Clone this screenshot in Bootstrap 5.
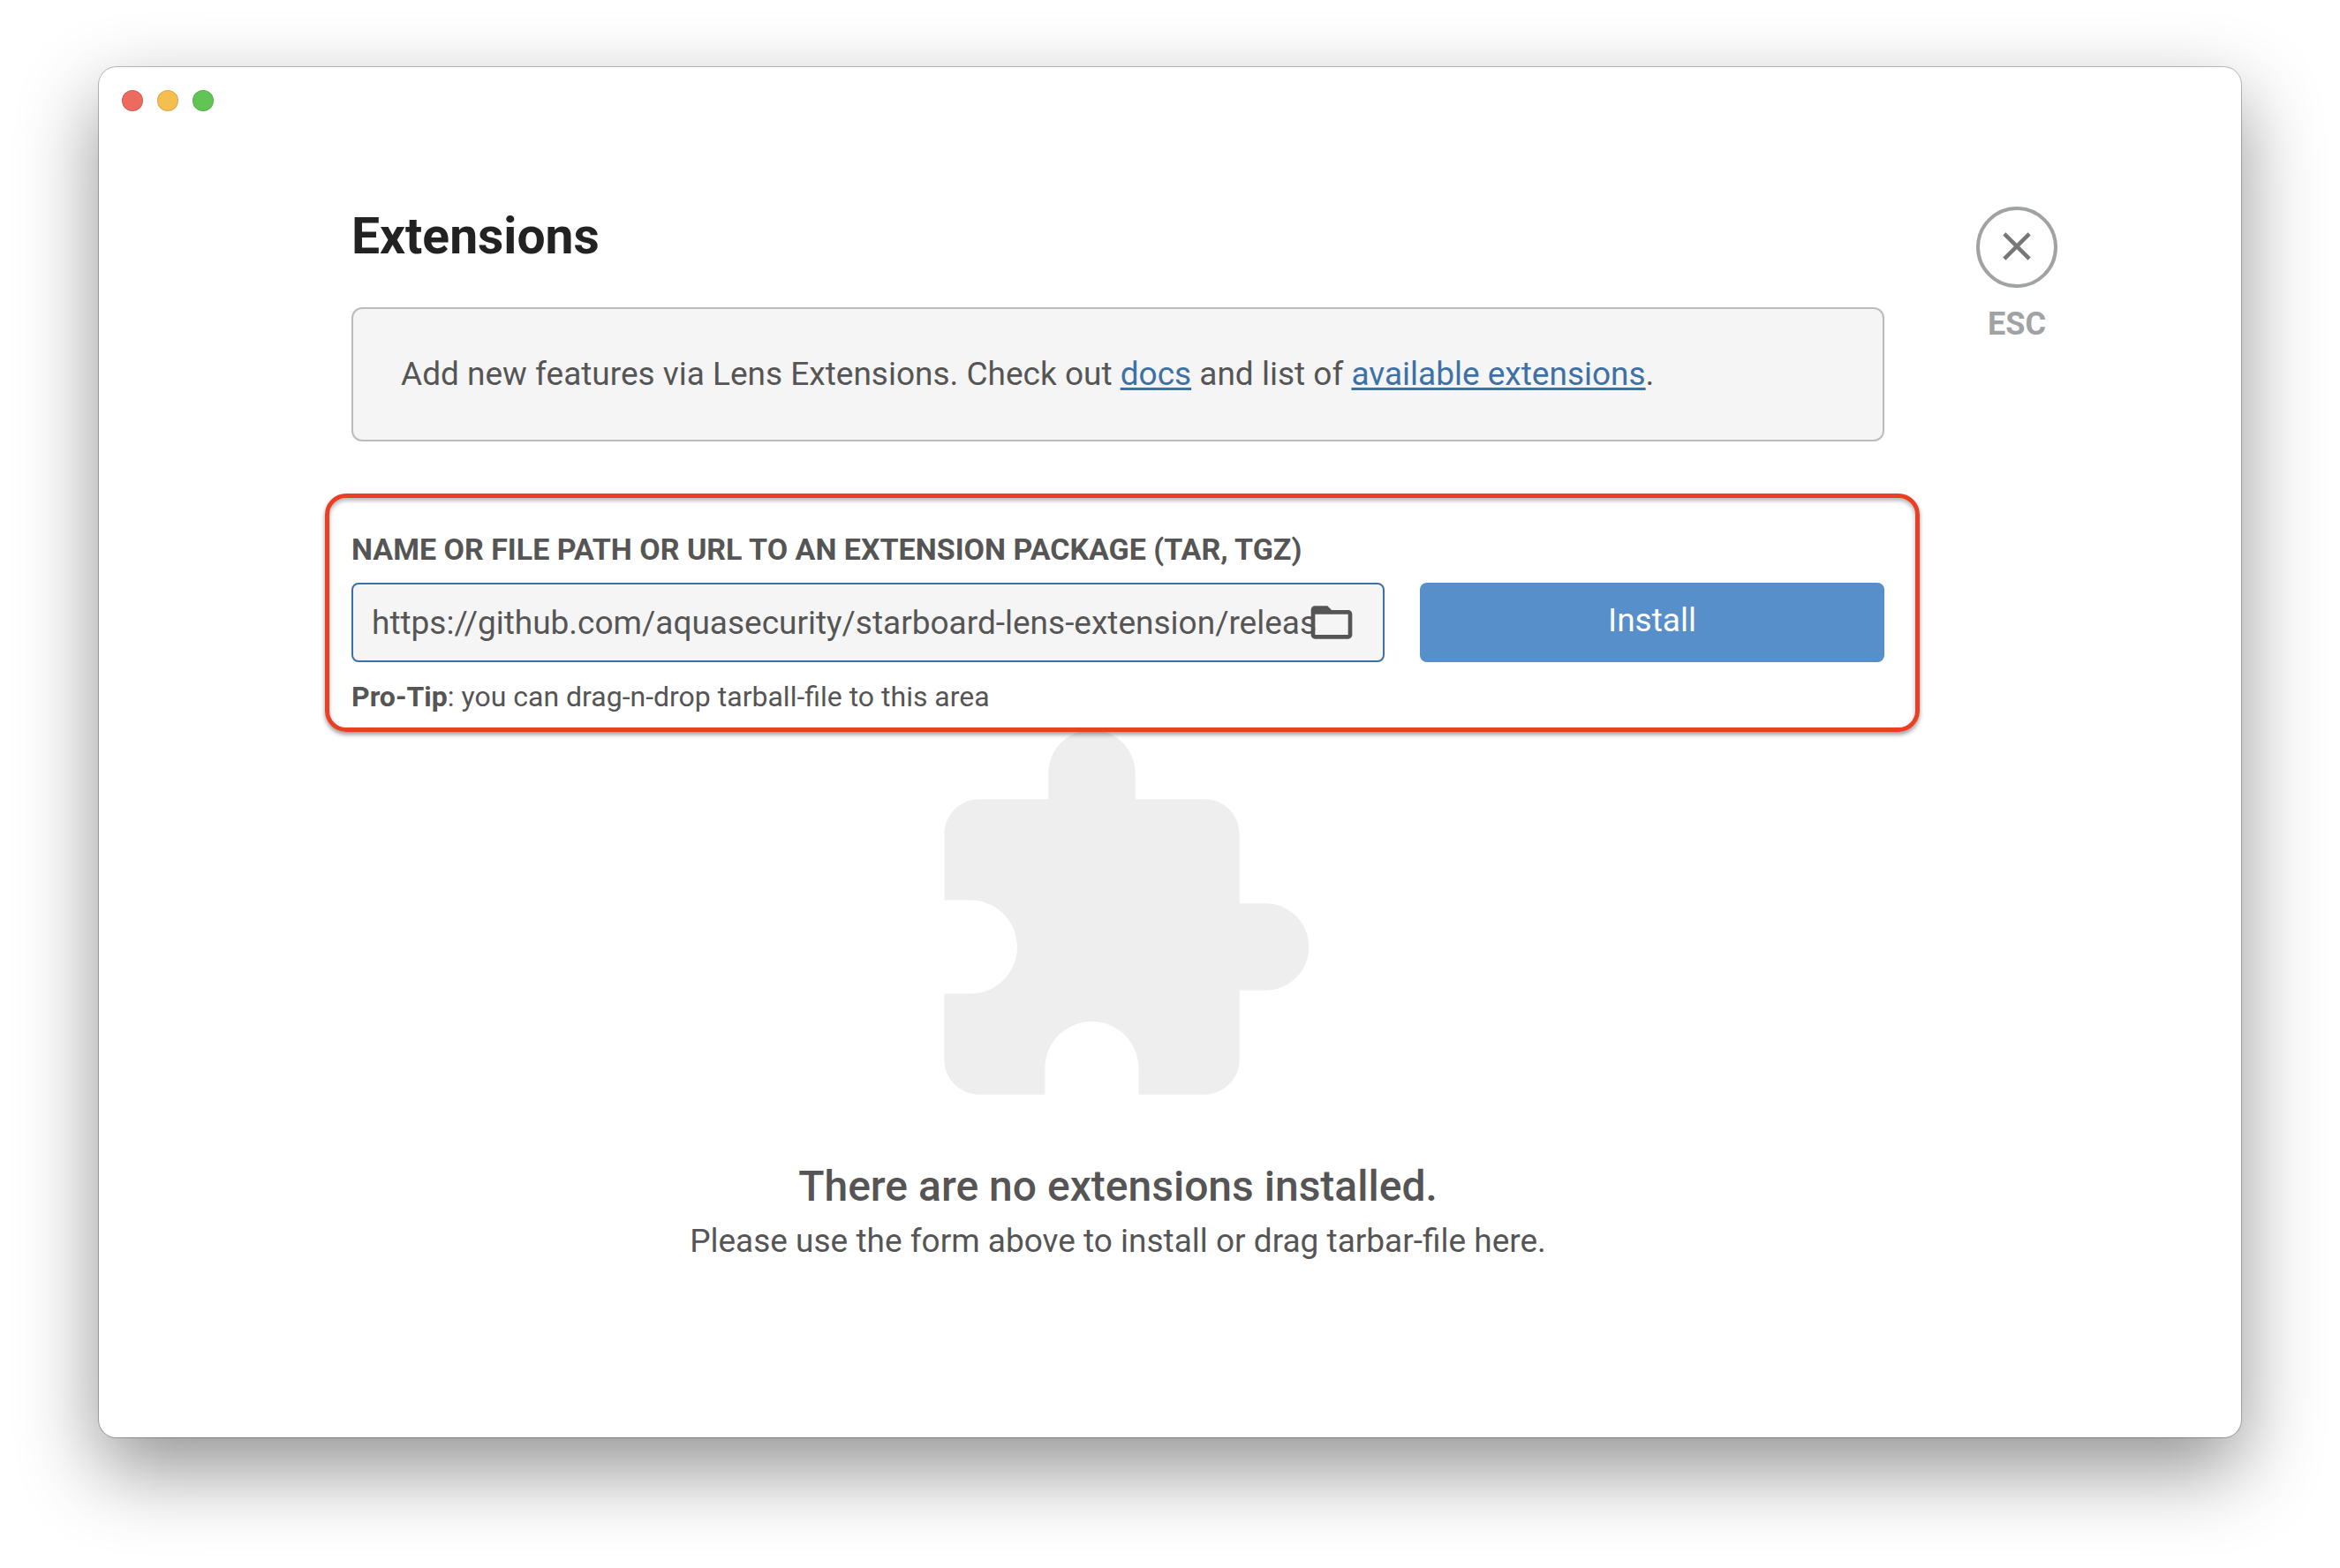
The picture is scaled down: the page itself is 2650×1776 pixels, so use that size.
<!DOCTYPE html>
<html lang="en">
<head>
<meta charset="utf-8">
<meta name="viewport" content="width=device-width, initial-scale=1">
<title>Extensions</title>
<link href="https://cdn.jsdelivr.net/npm/bootstrap@5.3.0/dist/css/bootstrap.min.css" rel="stylesheet">
<style>
body { font-family: Roboto, "Noto Sans", sans-serif; font-size: 37px; line-height: 48px; color: #555; background: #fff; padding: 76px 112px 148px; }
.app-window { border-radius: 20px; background: #fff; box-shadow: 0 0 0 1px rgba(0,0,0,.24), 0 36px 90px rgba(0,0,0,.43); }
.title-bar { padding: 26px; gap: 16px; }
.dot { width: 24px; height: 24px; border: 1px solid rgba(0,0,0,.12); border-radius: 50%; }
.dot-red { background: #ec6a5e; }
.dot-yellow { background: #f4bf4f; }
.dot-green { background: #61c554; }
.page-body { padding: 82px 208px 0 286px; gap: 104px; }
.page-title { font-size: 57px; line-height: 68px; font-weight: 700; color: #222; margin: 0 0 46px; }
.info-box { background: #f5f5f5; border: 2px solid #bcbcbc; border-radius: 12px; padding: 50px 54px; }
.info-box a { color: #3d71a6; text-decoration-thickness: 3px; text-underline-offset: 3px; }
.install-area { position: relative; z-index: 1; margin: 59px -40px 0 -30px; padding: 36px 35px 15px 25px; border: 5px solid #e93f24; border-radius: 24px; box-shadow: 0 3px 5px rgba(0,0,0,.4), inset 0 3px 5px rgba(0,0,0,.3); }
.install-label { font-size: 34px; line-height: 44px; font-weight: 700; margin-bottom: 16px; text-transform: uppercase; }
.field-row { gap: 40px; height: 90px; }
.path-field { flex: 1170 1 0; }
.path-input, .path-input:focus { height: 100%; border: 2px solid #3d71a6; border-radius: 8px; background: #f5f5f5; color: #555; font-size: 37px; line-height: 48px; padding: 0 74px 0 21px; box-shadow: none; }
.browse-btn { right: 32px; width: 56px; height: 56px; color: #555; }
.install-btn, .install-btn:hover { flex: 526 1 0; font-size: 37px; line-height: 48px; border: 0; border-radius: 8px; background: #568fc9; color: #fff; padding: 0 0 4px; }
.tip { font-size: 32px; line-height: 40px; margin-top: 19px; }
.empty-state { margin-top: -22px; }
.puzzle { width: 472px; height: 472px; color: #eee; }
.empty-title { font-size: 48px; line-height: 60px; font-weight: 500; margin: 35px 0 8px; }
.close-panel { width: 92px; }
.close-ring { width: 92px; height: 92px; padding-bottom: 3px; border: 4px solid #a0a2a4; border-radius: 50%; color: #777; }
.esc { font-size: 36px; line-height: 48px; font-weight: 700; color: #a0a2a4; margin-top: 17px; }
</style>
</head>
<body class="d-flex min-vh-100">
<div class="app-window flex-grow-1 d-flex flex-column">
  <div class="title-bar d-flex">
    <span class="dot dot-red"></span><span class="dot dot-yellow"></span><span class="dot dot-green"></span>
  </div>
  <div class="page-body d-flex align-items-start">
    <main class="flex-grow-1">
      <h1 class="page-title">Extensions</h1>
      <div class="info-box">Add new features via Lens Extensions. Check out <a href="#">docs</a> and list of <a href="#">available extensions</a>.</div>
      <form class="install-area">
        <label class="install-label d-block" for="pkg">Name or file path or URL to an extension package (tar, tgz)</label>
        <div class="field-row d-flex">
          <div class="path-field position-relative d-flex align-items-center">
            <input class="path-input form-control" id="pkg" type="text" value="https://github.com/aquasecurity/starboard-lens-extension/releases">
            <button class="browse-btn btn p-0 border-0 position-absolute d-flex" type="button" aria-label="Browse">
              <svg viewBox="0 0 24 24" width="56" height="56" fill="currentColor"><path d="M20 6h-8l-2-2H4c-1.100 0-1.990.9-1.990 2L2 18c0 1.100.9 2 2 2h16c1.100 0 2-.9 2-2V8c0-1.100-.9-2-2-2zm0 12H4V8h16v10z"/></svg>
            </button>
          </div>
          <button class="install-btn btn" type="button">Install</button>
        </div>
        <p class="tip mb-0"><b>Pro-Tip</b>: you can drag-n-drop tarball-file to this area</p>
      </form>
      <section class="empty-state text-center">
        <svg class="puzzle d-block mx-auto" viewBox="0 0 24 24" fill="currentColor"><path d="M20.500 11H19V7c0-1.100-.9-2-2-2h-4V3.500C13 2.120 11.880 1 10.500 1S8 2.120 8 3.500V5H4c-1.100 0-1.990.9-1.990 2v3.800H3.500c1.490 0 2.700 1.210 2.700 2.700s-1.210 2.700-2.700 2.700H2V20c0 1.100.9 2 2 2h3.800v-1.500c0-1.490 1.210-2.700 2.700-2.700 1.490 0 2.700 1.210 2.700 2.700V22H17c1.100 0 2-.9 2-2v-4h1.500c1.380 0 2.500-1.120 2.500-2.500S21.880 11 20.500 11z"/></svg>
        <h2 class="empty-title">There are no extensions installed.</h2>
        <p class="mb-0">Please use the form above to install or drag tarbar-file here.</p>
      </section>
    </main>
    <button class="close-panel btn p-0 border-0 d-flex flex-column align-items-center" type="button">
      <span class="close-ring d-flex align-items-center justify-content-center">
        <svg viewBox="0 0 24 24" width="54" height="54" fill="currentColor"><path d="M19 6.410L17.590 5 12 10.590 6.410 5 5 6.410 10.590 12 5 17.590 6.410 19 12 13.410 17.590 19 19 17.590 13.410 12z"/></svg>
      </span>
      <span class="esc">ESC</span>
    </button>
  </div>
</div>
<script src="https://cdn.jsdelivr.net/npm/bootstrap@5.3.0/dist/js/bootstrap.bundle.min.js"></script>
</body>
</html>
